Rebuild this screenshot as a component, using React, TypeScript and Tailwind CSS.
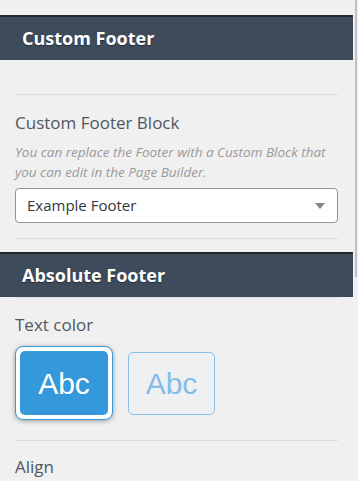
export default function App() {
  const font = { fontFamily: '"Open Sans", "Noto Sans", sans-serif' };
  return (
    <div className="w-[358px] h-[481px] overflow-hidden bg-[#f0f0f0] flex" style={font}>
      <div className="w-[353px] flex flex-col">
        <div className="h-[15px]" />
        <div className="h-[45px] border-t-2 border-[#23282d] bg-[#3d4b5a] pl-[22px] flex items-center">
          <h2 className="text-[18px] font-bold text-white [text-shadow:0_1px_1px_rgba(0,0,0,0.4)]">Custom Footer</h2>
        </div>
        <div className="px-[15px]">
          <div className="mt-[34px] border-t border-[#dcdcdc]" />
          <div className="pt-[16px] pb-[15px] border-b border-[#dcdcdc]">
            <div className="text-[17px] text-[#50575e] leading-[24px]">Custom Footer Block</div>
            <p className="mt-[7px] text-[13.5px] italic text-[#9a9a9a] leading-[20px]">
              You can replace the Footer with a Custom Block that you can edit in the Page Builder.
            </p>
            <div className="mt-[6px] h-[35px] bg-white border border-[#8c95a0] rounded-[4px] flex items-center justify-between pl-[11px] pr-[12px]">
              <span className="text-[15px] text-[#32373c]">Example Footer</span>
              <svg width="10" height="6" viewBox="0 0 10 6">
                <path d="M0 0h10L5 6z" fill="#7e8993" />
              </svg>
            </div>
          </div>
        </div>
        <div className="mt-[13px] h-[45px] border-t-2 border-[#23282d] bg-[#3d4b5a] pl-[22px] flex items-center">
          <h2 className="text-[18px] font-bold text-white [text-shadow:0_1px_1px_rgba(0,0,0,0.4)]">Absolute Footer</h2>
        </div>
        <div className="px-[15px]">
          <div className="border-t border-[#dcdcdc]" />
          <div className="pt-[15px] pb-[20px] border-b border-[#dcdcdc]">
            <div className="text-[17px] text-[#50575e] leading-[24px]">Text color</div>
            <div className="mt-[9px] flex items-center gap-[15px]">
              <div className="w-[98px] h-[74px] rounded-[8px] border border-[#3498db] bg-white p-[4px] shadow-[0_1px_5px_rgba(0,0,0,0.35)]">
                <div className="w-full h-full rounded-[5px] bg-[#3598db] flex items-center justify-center">
                  <span className="text-[30px] text-white" style={{ fontFamily: '"Liberation Sans", Arial, sans-serif' }}>Abc</span>
                </div>
              </div>
              <div className="w-[87px] h-[63px] rounded-[5px] border border-[#85c1e9] bg-[#eff0f2] flex items-center justify-center">
                <span className="text-[30px] text-[#84bce8]" style={{ fontFamily: '"Liberation Sans", Arial, sans-serif' }}>Abc</span>
              </div>
            </div>
          </div>
          <div className="pt-[14px] text-[17px] text-[#50575e] leading-[24px]">Align</div>
        </div>
      </div>
      <div className="w-[5px] relative">
        <div className="absolute left-[2px] top-0 w-[2px] h-[277px] bg-[#c1c1c1]" />
      </div>
    </div>
  );
}
